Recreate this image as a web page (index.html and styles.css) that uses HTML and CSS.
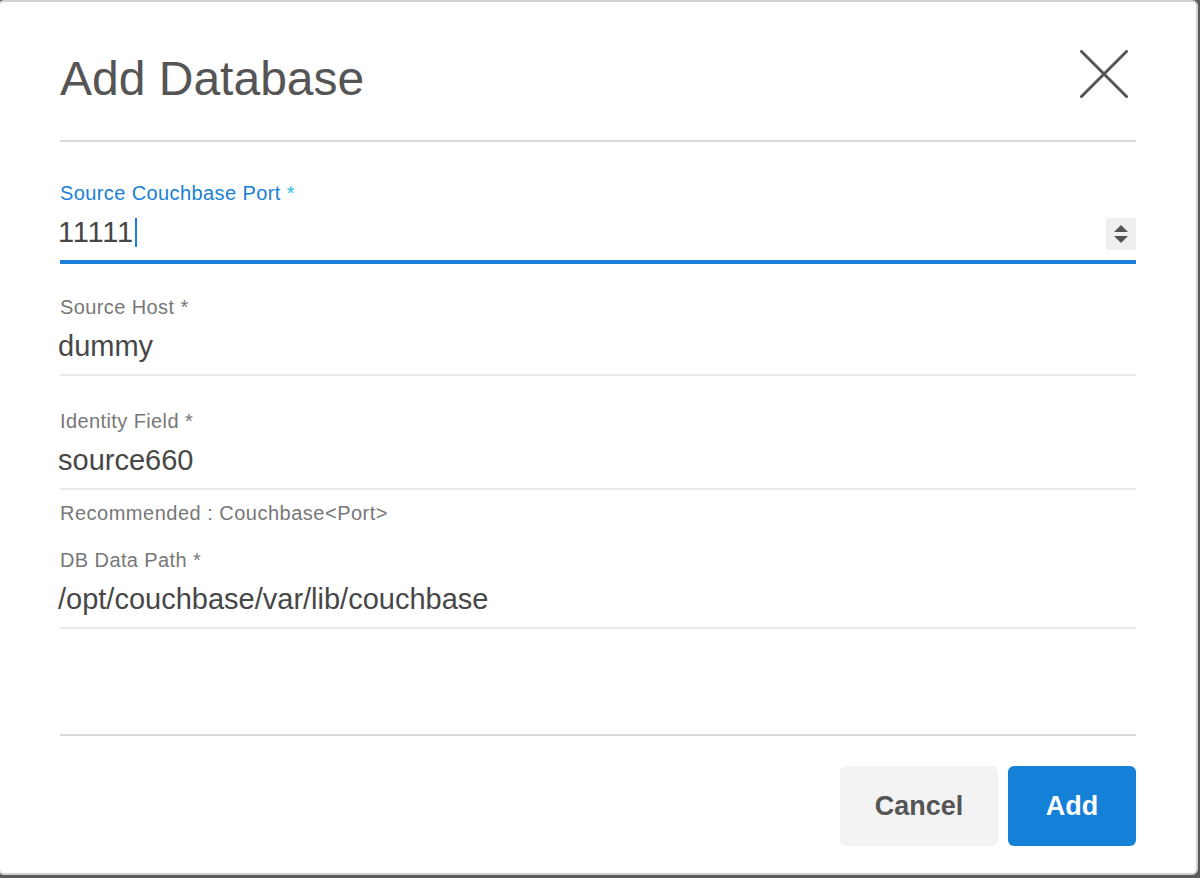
FILE: index.html
```html
<!DOCTYPE html>
<html lang="en">
<head>
<meta charset="utf-8">
<title>Add Database</title>
<link rel="stylesheet" href="styles.css">
</head>
<body>
<div class="dialog">
  <div class="header">
    <h1 class="title">Add Database</h1>
    <svg class="close" width="48" height="48" viewBox="0 0 48 48" aria-label="Close">
      <line x1="1.5" y1="1.5" x2="46.5" y2="46.5" />
      <line x1="46.5" y1="1.5" x2="1.5" y2="46.5" />
    </svg>
  </div>
  <div class="form">
    <div class="field field-focused">
      <div class="label">Source Couchbase Port <span class="req">*</span></div>
      <div class="input">
        <span class="value value-port">11111</span><span class="caret"></span>
        <span class="spinner">
          <svg width="16" height="20" viewBox="0 0 16 20">
            <path d="M8 1 L15 8 L1 8 Z" />
            <path d="M1 12 L15 12 L8 19 Z" />
          </svg>
        </span>
      </div>
    </div>
    <div class="field">
      <div class="label">Source Host *</div>
      <div class="input"><span class="value">dummy</span></div>
    </div>
    <div class="field">
      <div class="label">Identity Field *</div>
      <div class="input"><span class="value">source660</span></div>
    </div>
    <div class="hint">Recommended : Couchbase&lt;Port&gt;</div>
    <div class="field field-after-hint">
      <div class="label">DB Data Path *</div>
      <div class="input"><span class="value">/opt/couchbase/var/lib/couchbase</span></div>
    </div>
  </div>
  <div class="footer">
    <button class="btn btn-cancel">Cancel</button>
    <button class="btn btn-add">Add</button>
  </div>
</div>
</body>
</html>
```
FILE: styles.css
```css
html, body {
  margin: 0;
  padding: 0;
  height: 100%;
}
body {
  background: #5b5b5b;
  overflow: hidden;
  font-family: "Liberation Sans", Arial, Helvetica, sans-serif;
}
.dialog {
  box-sizing: border-box;
  width: 1200px;
  height: 875px;
  margin-left: -2px;
  background: #fff;
  border: 2px solid #d2d2d2;
  border-radius: 6px;
  padding: 0 60px;
  display: flex;
  flex-direction: column;
}
.header {
  display: flex;
  justify-content: space-between;
  align-items: flex-start;
  padding: 49px 0 33px;
  border-bottom: 2px solid #d9d9d9;
}
.title {
  margin: 0;
  font-size: 48px;
  line-height: 56px;
  font-weight: 400;
  color: #555;
}
.close {
  margin-top: -1px;
  margin-right: 8px;
  stroke: #555;
  stroke-width: 3;
  stroke-linecap: round;
}
.form {
  flex: 1;
  display: flex;
  flex-direction: column;
  padding-top: 39px;
}
.field + .field {
  margin-top: 33px;
}
.field-after-hint {
  margin-top: 24px;
}
.label {
  font-size: 20px;
  line-height: 24px;
  letter-spacing: 0.4px;
  color: #777;
}
.field-focused .label {
  color: #1a7fd6;
}
.req {
  color: #2cbfe6;
}
.input {
  display: flex;
  align-items: center;
  margin-top: 10px;
  height: 34px;
  padding-bottom: 11px;
  border-bottom: 2px solid #e8e8e8;
}
.field-focused .input {
  border-bottom-color: #1a80d8;
  box-shadow: 0 2px 0 #1a80d8;
}
.value {
  margin-left: -2px;
  font-size: 29px;
  line-height: 34px;
  color: #474747;
}
.value-port {
  letter-spacing: 0.8px;
}
.caret {
  display: inline-block;
  width: 2px;
  height: 29px;
  margin-left: 1px;
  background: #1a7fd6;
}
.spinner {
  margin-left: auto;
  margin-top: 3px;
  width: 30px;
  height: 32px;
  background: #efefef;
  border-radius: 2px;
  display: flex;
  align-items: center;
  justify-content: center;
}
.spinner svg {
  fill: #555;
}
.hint {
  margin-top: 12px;
  font-size: 20px;
  line-height: 22px;
  letter-spacing: 0.5px;
  color: #777;
}
.footer {
  display: flex;
  justify-content: flex-end;
  gap: 10px;
  border-top: 2px solid #d9d9d9;
  padding: 30px 0 27px;
}
.btn {
  height: 80px;
  border: none;
  border-radius: 6px;
  font-family: "Liberation Sans", Arial, Helvetica, sans-serif;
  font-size: 27px;
  font-weight: 700;
  padding: 0;
  cursor: pointer;
}
.btn-cancel {
  width: 158px;
  background: #f3f3f3;
  color: #555;
}
.btn-add {
  width: 128px;
  background: #1580d8;
  color: #fff;
}
```
